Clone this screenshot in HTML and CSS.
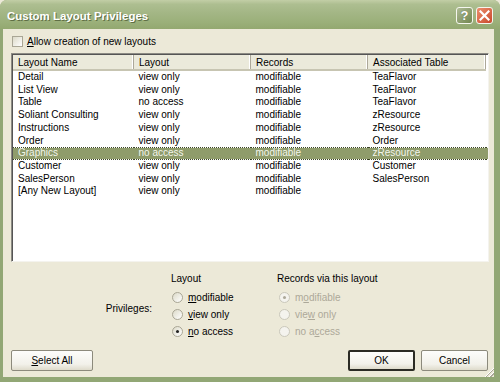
FILE: index.html
```html
<!DOCTYPE html>
<html lang="en">
<head>
    <meta charset="UTF-8">
    <meta name="viewport" content="width=device-width, initial-scale=1.0">
    <title>Custom Layout Privileges</title>
    <link rel="stylesheet" href="styles.css">
</head>
<body>

    <div class="window">
        <div class="titlebar">
            <span class="title">Custom Layout Privileges</span>
            <div class="controls">
                <span class="cap-btn help">?</span>
                <span class="cap-btn close">
                    <svg width="11" height="11" viewBox="0 0 11 11">
                        <path d="M1.5 1.5 L9.5 9.5 M9.5 1.5 L1.5 9.5" stroke="#fff" stroke-width="2.2" stroke-linecap="square"/>
                    </svg>
                </span>
            </div>
        </div>

        <div class="client">
            <label class="check-row">
                <span class="checkbox"></span>
                <span><u>A</u>llow creation of new layouts</span>
            </label>

            <div class="listbox">
                <table class="layouts">
                    <thead>
                        <tr>
                            <th class="c1">Layout Name</th>
                            <th class="c2">Layout</th>
                            <th class="c3">Records</th>
                            <th class="c4">Associated Table</th>
                            <th class="filler"></th>
                        </tr>
                    </thead>
                    <tbody>
                        <tr><td>Detail</td><td>view only</td><td>modifiable</td><td>TeaFlavor</td><td></td></tr>
                        <tr><td>List View</td><td>view only</td><td>modifiable</td><td>TeaFlavor</td><td></td></tr>
                        <tr><td>Table</td><td>no access</td><td>modifiable</td><td>TeaFlavor</td><td></td></tr>
                        <tr><td>Soliant Consulting</td><td>view only</td><td>modifiable</td><td>zResource</td><td></td></tr>
                        <tr><td>Instructions</td><td>view only</td><td>modifiable</td><td>zResource</td><td></td></tr>
                        <tr><td>Order</td><td>view only</td><td>modifiable</td><td>Order</td><td></td></tr>
                        <tr class="selected"><td>Graphics</td><td>no access</td><td>modifiable</td><td>zResource</td><td></td></tr>
                        <tr><td>Customer</td><td>view only</td><td>modifiable</td><td>Customer</td><td></td></tr>
                        <tr><td>SalesPerson</td><td>view only</td><td>modifiable</td><td>SalesPerson</td><td></td></tr>
                        <tr><td>[Any New Layout]</td><td>view only</td><td>modifiable</td><td></td><td></td></tr>
                    </tbody>
                </table>
            </div>

            <div class="privileges">
                <div class="priv-label">Privileges:</div>
                <div class="group layout-group">
                    <div class="group-title">Layout</div>
                    <label class="radio"><span class="dot"></span><span><u>m</u>odifiable</span></label>
                    <label class="radio"><span class="dot"></span><span><u>v</u>iew only</span></label>
                    <label class="radio"><span class="dot on"></span><span><u>n</u>o access</span></label>
                </div>
                <div class="group records-group">
                    <div class="group-title">Records via this layout</div>
                    <label class="radio disabled"><span class="dot on"></span><span>m<u>o</u>difiable</span></label>
                    <label class="radio disabled"><span class="dot"></span><span>vie<u>w</u> only</span></label>
                    <label class="radio disabled"><span class="dot"></span><span>no a<u>c</u>cess</span></label>
                </div>
            </div>

            <div class="button-row">
                <button class="btn select-all"><u>S</u>elect All</button>
                <div class="right-buttons">
                    <button class="btn default">OK</button>
                    <button class="btn">Cancel</button>
                </div>
            </div>
            <span class="grip"></span>
        </div>
    </div>

</body>
</html>
```

FILE: styles.css
```css
body {
    margin: 0;
    font-family: "Liberation Sans", Arial, sans-serif;
    font-size: 10px;
    color: #000;
    background: #ece9d8;
}

.window {
    width: 500px;
    height: 382px;
    box-sizing: border-box;
    display: flex;
    flex-direction: column;
    background: #92a775;
    border-radius: 7px 7px 0 0;
    overflow: hidden;
}

.titlebar {
    height: 29px;
    flex: none;
    display: flex;
    align-items: center;
    justify-content: space-between;
    padding: 0 7px 0 7px;
    background: linear-gradient(#c2cea6 0%, #adbe90 15%, #a3b685 45%, #9bb07a 75%, #93a870 100%);
}

.title {
    font-family: "Liberation Sans", sans-serif;
    font-weight: bold;
    font-size: 11.5px;
    color: #fff;
    text-shadow: 1px 1px 0 #5f6f45;
    margin-top: 2px;
}

.controls {
    display: flex;
    gap: 3px;
    margin-top: 2px;
}

.cap-btn {
    width: 15px;
    height: 15px;
    border: 1px solid #f4f6ee;
    border-radius: 3px;
    display: flex;
    align-items: center;
    justify-content: center;
    color: #fff;
    font-weight: bold;
    font-size: 13px;
    font-family: "Liberation Sans", sans-serif;
    text-shadow: 0 0 1px #4d5a38;
}

.help {
    background: linear-gradient(135deg, #aebb95, #72864f);
}

.close {
    background: linear-gradient(135deg, #ec8f6e, #c9472b);
}

.client {
    flex: 1;
    position: relative;
    margin: 0 6px 5px 3px;
    background: #ece9d8;
    display: flex;
    flex-direction: column;
    padding: 7px 5px 0 8px;
}

.check-row {
    display: flex;
    align-items: center;
    gap: 4px;
    height: 11px;
    margin-left: 1px;
}

.checkbox {
    width: 9px;
    height: 9px;
    border: 1px solid #a9a695;
    background: linear-gradient(135deg, #dcdac8, #fff);
}

.listbox {
    margin-top: 6px;
    height: 207px;
    background: #fff;
    border: 1px solid #828790;
    border-color: #8c8b84 #f4f3ee #f4f3ee #8c8b84;
    box-shadow: inset 1px 1px 0 #555;
    overflow: hidden;
}

.layouts {
    border-collapse: collapse;
    width: 100%;
    table-layout: fixed;
    margin: 1px 0 0 1px;
}

.layouts th {
    height: 14px;
    padding: 0 0 0 5px;
    font-weight: normal;
    text-align: left;
    background: #ebeadb;
    border-right: 1px solid #aca899;
    border-bottom: 2px solid #c7c5b2;
    box-shadow: inset -1px 0 0 #fff;
}

.layouts th.filler {
    background: #fff;
    border: none;
    box-shadow: none;
}

.c1 { width: 115px; }
.c2 { width: 111px; }
.c3 { width: 111px; }
.c4 { width: 112px; }

.layouts td {
    height: 12.7px;
    line-height: 12.7px;
    padding: 0 0 0 5px;
    white-space: nowrap;
}

.layouts tr.selected td {
    background: #8f9c6b;
    color: #f2f5ea;
    border-top: 1px dotted #3c4526;
    border-bottom: 1px dotted #3c4526;
    height: 10.7px;
    line-height: 10.7px;
}

.privileges {
    display: flex;
    margin-top: 11px;
    height: 76px;
}

.priv-label {
    width: 160px;
    text-align: right;
    padding-top: 30px;
    padding-right: 19px;
    box-sizing: border-box;
}

.group {
    display: flex;
    flex-direction: column;
}

.layout-group {
    width: 106px;
}

.group-title {
    height: 12px;
    margin-bottom: 7px;
}

.radio {
    display: flex;
    align-items: center;
    gap: 5px;
    height: 11px;
    margin-bottom: 6px;
    margin-left: 1px;
}

.records-group .radio {
    margin-left: 2px;
}

.dot {
    width: 9px;
    height: 9px;
    border-radius: 50%;
    border: 1px solid #a9a695;
    background: linear-gradient(135deg, #dcdac8, #fff);
    display: flex;
    align-items: center;
    justify-content: center;
}

.dot.on::after {
    content: "";
    width: 3px;
    height: 3px;
    border-radius: 50%;
    background: #222;
}

.radio.disabled {
    color: #aca899;
}

.radio.disabled .dot {
    border-color: #cac8bb;
    background: #f4f3ee;
}

.radio.disabled .dot.on::after {
    background: #aca899;
}

.button-row {
    display: flex;
    justify-content: space-between;
    align-items: center;
    margin-top: 1px;
    padding-right: 1px;
}

.right-buttons {
    display: flex;
    gap: 6px;
}

.btn {
    font-family: "Liberation Sans", Arial, sans-serif;
    font-size: 10px;
    height: 21px;
    padding: 0;
    border: 1px solid #8c8a7c;
    border-radius: 2px;
    background: linear-gradient(#fdfdfb, #f2f1ea 70%, #dedbcb);
    color: #000;
}

.select-all {
    width: 82px;
}

.right-buttons .btn {
    width: 67px;
}

.btn.default {
    border: 2px solid #2b2b24;
}

.grip {
    position: absolute;
    right: 0;
    bottom: 0;
    width: 9px;
    height: 9px;
    background: linear-gradient(135deg, transparent 45%, #fff 45%, #fff 52%, #aca899 52%, #aca899 60%, transparent 60%, transparent 70%, #fff 70%, #fff 77%, #aca899 77%, #aca899 85%, transparent 85%);
}
```
